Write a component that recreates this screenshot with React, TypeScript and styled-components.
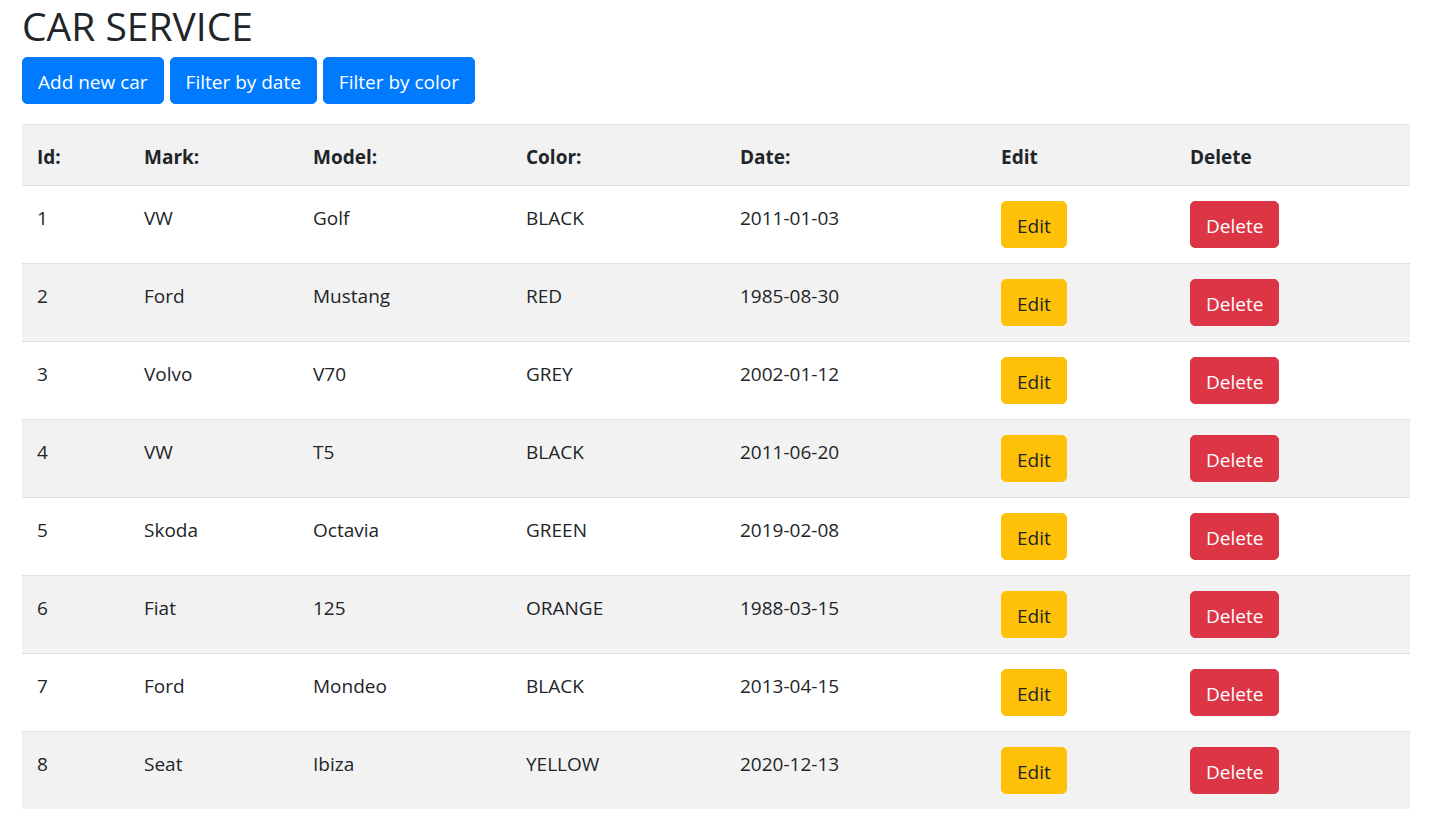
import React from "react";
import styled, { createGlobalStyle } from "styled-components";

const GlobalStyle = createGlobalStyle`
  html, body {
    margin: 0;
    padding: 0;
    background: #ffffff;
  }
  body {
    font-family: "Open Sans", "Noto Sans", "Liberation Sans", sans-serif;
    font-size: 19px;
    line-height: 30px;
    color: #212529;
  }
  * { box-sizing: border-box; }
`;

const Page = styled.div`
  padding: 2px 25px 0 22px;
`;

const Title = styled.h1`
  margin: 0 0 7px;
  font-size: 39px;
  line-height: 48px;
  font-weight: 400;
  color: #212529;
`;

const Toolbar = styled.div`
  display: flex;
  gap: 6px;
  margin-bottom: 20px;
`;

type Variant = "primary" | "warning" | "danger";

const palette: Record<Variant, { bg: string; fg: string }> = {
  primary: { bg: "#007bff", fg: "#ffffff" },
  warning: { bg: "#ffc107", fg: "#212529" },
  danger: { bg: "#dc3545", fg: "#ffffff" },
};

const Button = styled.button<{ $variant: Variant }>`
  display: inline-block;
  font-family: inherit;
  font-size: 19px;
  line-height: 30px;
  font-weight: 400;
  padding: 8.5px 15px 6.5px;
  border: 1px solid ${(p) => palette[p.$variant].bg};
  border-radius: 5px;
  background: ${(p) => palette[p.$variant].bg};
  color: ${(p) => palette[p.$variant].fg};
  cursor: pointer;
  white-space: nowrap;
`;

const Table = styled.table`
  width: 100%;
  border-collapse: collapse;
  table-layout: fixed;
`;

const Row = styled.tr<{ $striped?: boolean }>`
  background: ${(p) => (p.$striped ? "#f2f2f2" : "#ffffff")};
`;

const HeadCell = styled.th`
  padding: 17px 15px 13px;
  border-top: 1px solid #dee2e6;
  text-align: left;
  vertical-align: top;
  font-weight: 700;
`;

const Cell = styled.td`
  padding: 17px 15px 13px;
  border-top: 1px solid #dee2e6;
  text-align: left;
  vertical-align: top;
`;

const ActionCell = styled.td`
  padding: 15px;
  border-top: 1px solid #dee2e6;
  text-align: left;
  vertical-align: top;
`;

const cars = [
  { id: 1, mark: "VW", model: "Golf", color: "BLACK", date: "2011-01-03" },
  { id: 2, mark: "Ford", model: "Mustang", color: "RED", date: "1985-08-30" },
  { id: 3, mark: "Volvo", model: "V70", color: "GREY", date: "2002-01-12" },
  { id: 4, mark: "VW", model: "T5", color: "BLACK", date: "2011-06-20" },
  { id: 5, mark: "Skoda", model: "Octavia", color: "GREEN", date: "2019-02-08" },
  { id: 6, mark: "Fiat", model: "125", color: "ORANGE", date: "1988-03-15" },
  { id: 7, mark: "Ford", model: "Mondeo", color: "BLACK", date: "2013-04-15" },
  { id: 8, mark: "Seat", model: "Ibiza", color: "YELLOW", date: "2020-12-13" },
];

const widths = [107, 169, 213, 214, 261, 189, 235];

export default function App() {
  return (
    <>
      <GlobalStyle />
      <Page>
        <Title>CAR SERVICE</Title>
        <Toolbar>
          <Button $variant="primary">Add new car</Button>
          <Button $variant="primary">Filter by date</Button>
          <Button $variant="primary">Filter by color</Button>
        </Toolbar>
        <Table>
          <colgroup>
            {widths.map((w, i) => (
              <col key={i} style={{ width: w }} />
            ))}
          </colgroup>
          <thead>
            <Row $striped>
              <HeadCell>Id:</HeadCell>
              <HeadCell>Mark:</HeadCell>
              <HeadCell>Model:</HeadCell>
              <HeadCell>Color:</HeadCell>
              <HeadCell>Date:</HeadCell>
              <HeadCell>Edit</HeadCell>
              <HeadCell>Delete</HeadCell>
            </Row>
          </thead>
          <tbody>
            {cars.map((c, i) => (
              <Row key={c.id} $striped={i % 2 === 1}>
                <Cell>{c.id}</Cell>
                <Cell>{c.mark}</Cell>
                <Cell>{c.model}</Cell>
                <Cell>{c.color}</Cell>
                <Cell>{c.date}</Cell>
                <ActionCell>
                  <Button $variant="warning">Edit</Button>
                </ActionCell>
                <ActionCell>
                  <Button $variant="danger">Delete</Button>
                </ActionCell>
              </Row>
            ))}
          </tbody>
        </Table>
      </Page>
    </>
  );
}
